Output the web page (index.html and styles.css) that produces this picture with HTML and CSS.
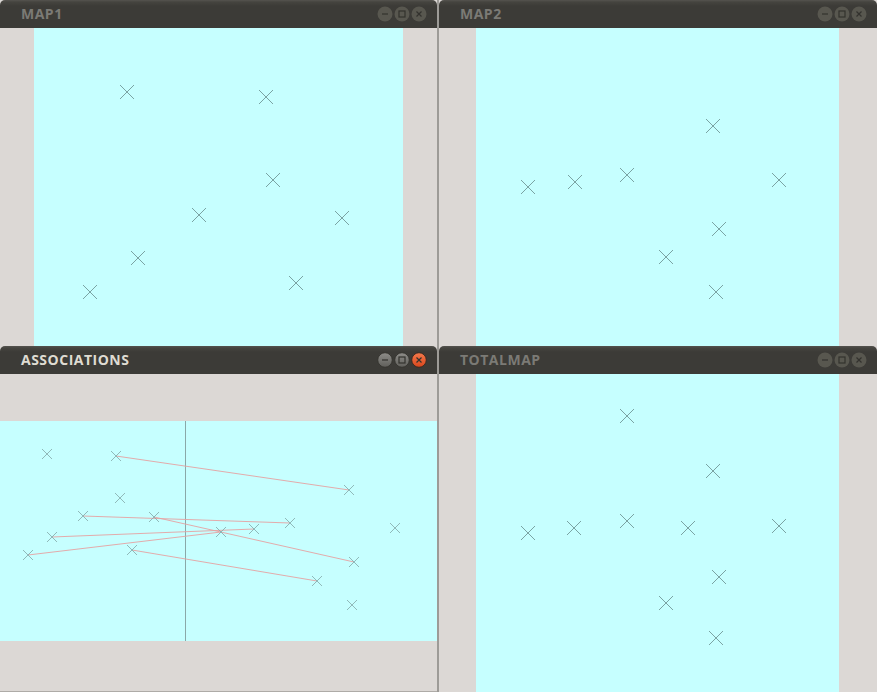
FILE: index.html
```html
<!DOCTYPE html>
<html>
<head>
<meta charset="utf-8">
<title>Maps</title>
<link rel="stylesheet" href="styles.css">
</head>
<body>
<div class="desktop">
  <section class="window">
    <header class="titlebar">
      <span class="title">MAP1</span>
      <div class="controls">
        <svg class="btn" width="16" height="16" viewBox="0 0 16 16"><circle cx="8" cy="8" r="7.5" class="disc"/><path d="M5 8h6" class="glyph"/></svg>
        <svg class="btn" width="16" height="16" viewBox="0 0 16 16"><circle cx="8" cy="8" r="7.5" class="disc"/><rect x="5" y="5" width="6" height="6" class="glyph"/></svg>
        <svg class="btn" width="16" height="16" viewBox="0 0 16 16"><circle cx="8" cy="8" r="7.5" class="disc"/><path d="M5.5 5.5l5 5M5.5 10.5l5-5" class="glyph"/></svg>
      </div>
    </header>
    <div class="content">
      <div class="margin left-a"></div>
      <div class="field field-a">
        <svg width="369" height="318" class="plot">
          <path class="mark" d="M86 57l14 14m-14 0l14-14M225 62l14 14m-14 0l14-14M232 145l14 14m-14 0l14-14M158 180l14 14m-14 0l14-14M301 183l14 14m-14 0l14-14M97 223l14 14m-14 0l14-14M49 257l14 14m-14 0l14-14M255 248l14 14m-14 0l14-14"/>
        </svg>
      </div>
      <div class="margin fill"></div>
    </div>
  </section>

  <section class="window">
    <header class="titlebar">
      <span class="title">MAP2</span>
      <div class="controls">
        <svg class="btn" width="16" height="16" viewBox="0 0 16 16"><circle cx="8" cy="8" r="7.5" class="disc"/><path d="M5 8h6" class="glyph"/></svg>
        <svg class="btn" width="16" height="16" viewBox="0 0 16 16"><circle cx="8" cy="8" r="7.5" class="disc"/><rect x="5" y="5" width="6" height="6" class="glyph"/></svg>
        <svg class="btn" width="16" height="16" viewBox="0 0 16 16"><circle cx="8" cy="8" r="7.5" class="disc"/><path d="M5.5 5.5l5 5M5.5 10.5l5-5" class="glyph"/></svg>
      </div>
    </header>
    <div class="content">
      <div class="margin left-b"></div>
      <div class="field field-b">
        <svg width="363" height="318" class="plot">
          <path class="mark" d="M45 152l14 14m-14 0l14-14M92 147l14 14m-14 0l14-14M144 140l14 14m-14 0l14-14M230 91l14 14m-14 0l14-14M296 145l14 14m-14 0l14-14M236 194l14 14m-14 0l14-14M183 222l14 14m-14 0l14-14M233 257l14 14m-14 0l14-14"/>
        </svg>
      </div>
      <div class="margin fill"></div>
    </div>
  </section>

  <section class="window">
    <header class="titlebar">
      <span class="title active">ASSOCIATIONS</span>
      <div class="controls">
        <svg class="btn" width="16" height="16" viewBox="0 0 16 16"><defs><linearGradient id="gg" x1="0" y1="0" x2="0" y2="1"><stop offset="0" stop-color="#8e8d89"/><stop offset="1" stop-color="#5f5e5a"/></linearGradient><linearGradient id="og" x1="0" y1="0" x2="0" y2="1"><stop offset="0" stop-color="#f47a4c"/><stop offset="1" stop-color="#d9461c"/></linearGradient></defs><circle cx="8" cy="8" r="7.3" fill="url(#gg)" stroke="#35342f" stroke-width="1"/><path d="M5 8h6" class="glyph"/></svg>
        <svg class="btn" width="16" height="16" viewBox="0 0 16 16"><circle cx="8" cy="8" r="7.3" fill="url(#gg)" stroke="#35342f" stroke-width="1"/><rect x="5" y="5" width="6" height="6" class="glyph"/></svg>
        <svg class="btn" width="16" height="16" viewBox="0 0 16 16"><circle cx="8" cy="8" r="7.3" fill="url(#og)" stroke="#3a2a22" stroke-width="1"/><path d="M5.5 5.5l5 5M5.5 10.5l5-5" class="glyph"/></svg>
      </div>
    </header>
    <div class="content assoc">
      <div class="band"></div>
      <div class="field field-c">
        <svg width="437" height="220" class="plot">
          <path class="axis" d="M185.5 0V220"/>
          <path class="link" d="M116 35L349 69M83 95L290 102M154 96L354 141M52 116L254 108M28 134L221 111M132 129L317 160"/>
          <path class="mark small" d="M42 28l10 10m-10 0l10-10M111 30l10 10m-10 0l10-10M115 72l10 10m-10 0l10-10M78 90l10 10m-10 0l10-10M149 91l10 10m-10 0l10-10M47 111l10 10m-10 0l10-10M23 129l10 10m-10 0l10-10M127 124l10 10m-10 0l10-10M344 64l10 10m-10 0l10-10M285 97l10 10m-10 0l10-10M249 103l10 10m-10 0l10-10M216 106l10 10m-10 0l10-10M390 102l10 10m-10 0l10-10M349 136l10 10m-10 0l10-10M312 155l10 10m-10 0l10-10M347 179l10 10m-10 0l10-10"/>
        </svg>
      </div>
      <div class="band fill"></div>
    </div>
  </section>

  <section class="window">
    <header class="titlebar">
      <span class="title">TOTALMAP</span>
      <div class="controls">
        <svg class="btn" width="16" height="16" viewBox="0 0 16 16"><circle cx="8" cy="8" r="7.5" class="disc"/><path d="M5 8h6" class="glyph"/></svg>
        <svg class="btn" width="16" height="16" viewBox="0 0 16 16"><circle cx="8" cy="8" r="7.5" class="disc"/><rect x="5" y="5" width="6" height="6" class="glyph"/></svg>
        <svg class="btn" width="16" height="16" viewBox="0 0 16 16"><circle cx="8" cy="8" r="7.5" class="disc"/><path d="M5.5 5.5l5 5M5.5 10.5l5-5" class="glyph"/></svg>
      </div>
    </header>
    <div class="content">
      <div class="margin left-b"></div>
      <div class="field field-b">
        <svg width="363" height="318" class="plot">
          <path class="mark" d="M144 35l14 14m-14 0l14-14M230 90l14 14m-14 0l14-14M45 152l14 14m-14 0l14-14M91 147l14 14m-14 0l14-14M144 140l14 14m-14 0l14-14M205 147l14 14m-14 0l14-14M296 145l14 14m-14 0l14-14M236 196l14 14m-14 0l14-14M183 222l14 14m-14 0l14-14M233 257l14 14m-14 0l14-14"/>
        </svg>
      </div>
      <div class="margin fill"></div>
    </div>
  </section>
</div>
</body>
</html>
```

FILE: styles.css
```css
html, body {
  margin: 0;
  padding: 0;
}

body {
  width: 877px;
  height: 692px;
  overflow: hidden;
  background: #3c3b37;
  font-family: "Open Sans", "DejaVu Sans", sans-serif;
}

.desktop {
  display: grid;
  grid-template-columns: 437px 438px;
  grid-template-rows: 346px 346px;
  column-gap: 2px;
  background: #9d9b97;
  width: 877px;
  height: 692px;
}

.window {
  display: flex;
  flex-direction: column;
  background: #dcd8d5;
  overflow: hidden;
  min-height: 0;
}

.titlebar {
  flex: none;
  height: 28px;
  box-sizing: border-box;
  display: flex;
  align-items: center;
  justify-content: space-between;
  padding: 0 10px 0 21px;
  background: linear-gradient(#55534f 0, #45443f 2px, #3c3b37 6px, #3c3b37 100%);
  border-radius: 5px 5px 0 0;
}

.title {
  font-weight: 700;
  font-size: 14px;
  line-height: 1;
  color: #7b7a75;
  letter-spacing: 0.5px;
}

.title.active {
  color: #dfdbd2;
}

.controls {
  display: flex;
  gap: 1px;
}

.btn {
  display: block;
}

.disc {
  fill: #58574f;
}

.glyph {
  fill: none;
  stroke: #33322e;
  stroke-width: 1.2;
}

.content {
  flex: 1;
  display: flex;
  min-height: 0;
}

.margin {
  background: #dcd8d5;
}

.left-a {
  width: 34px;
  flex: none;
}

.left-b {
  width: 37px;
  flex: none;
}

.fill {
  flex: 1;
}

.field {
  flex: none;
  background: #c6ffff;
}

.field-a {
  width: 369px;
}

.field-b {
  width: 363px;
}

.assoc {
  flex-direction: column;
  border-bottom: 1px solid #aeaba7;
}

.band {
  height: 47px;
  flex: none;
  background: #dcd8d5;
}

.band.fill {
  flex: 1;
  height: auto;
}

.field-c {
  width: 437px;
  height: 220px;
}

.plot {
  display: block;
}

.mark {
  fill: none;
  stroke: #7aa3a3;
  stroke-width: 1;
}

.mark.small {
  stroke: #86adad;
  opacity: 0.85;
}

.link {
  fill: none;
  stroke: #e5a2a2;
  stroke-width: 1;
  opacity: 0.9;
}

.axis {
  fill: none;
  stroke: #8aa8a8;
  stroke-width: 1;
}
```
